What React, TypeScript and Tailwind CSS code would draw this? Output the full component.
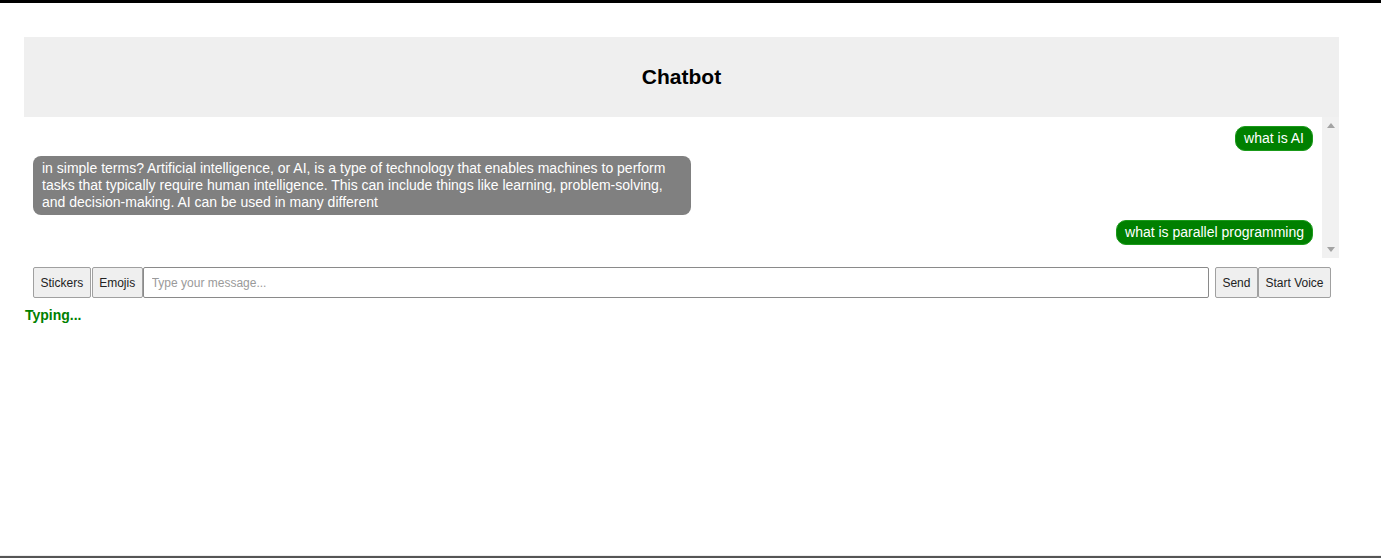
import React from 'react';

export default function App() {
  const messages = [
    { from: 'user', text: 'what is AI' },
    {
      from: 'bot',
      text: 'in simple terms? Artificial intelligence, or AI, is a type of technology that enables machines to perform tasks that typically require human intelligence. This can include things like learning, problem-solving, and decision-making. AI can be used in many different',
    },
    { from: 'user', text: 'what is parallel programming' },
  ];

  const btn = 'h-[31px] px-[6.5px] bg-[#efefef] border border-[#a0a0a0] rounded-[2px] text-[#222]';

  return (
    <div className="w-[1381px] h-[558px] bg-white border-t-[3px] border-black font-['Liberation_Sans',Arial,sans-serif] relative">
      <div className="ml-[24px] mt-[34px] w-[1315px]">
        {/* Header */}
        <div className="h-[80px] bg-[#efefef] flex items-center justify-center">
          <h1 className="text-[21px] font-bold text-black">Chatbot</h1>
        </div>

        {/* Messages + scrollbar */}
        <div className="h-[141px] flex bg-white">
          <div className="flex-1 overflow-hidden pl-[9px] pr-[9px] pt-[9px] flex flex-col gap-[5px]">
            {messages.map((m, i) =>
              m.from === 'user' ? (
                <div key={i} className="flex justify-end">
                  <div className="bg-[#008000] border border-[#1a9a1a] text-white text-[14px] leading-[17px] px-[8px] py-[3px] rounded-[10px]">
                    {m.text}
                  </div>
                </div>
              ) : (
                <div key={i} className="flex justify-start">
                  <div className="bg-[#808080] text-white text-[14px] leading-[17px] px-[9px] py-[4px] rounded-[8px] max-w-[658px]">
                    {m.text}
                  </div>
                </div>
              )
            )}
          </div>
          <div className="w-[17px] bg-[#f1f1f1] flex flex-col items-center justify-between py-[6px]">
            <svg width="8" height="5" viewBox="0 0 8 5"><path d="M0 5 L4 0 L8 5 Z" fill="#a3a3a3" /></svg>
            <svg width="8" height="5" viewBox="0 0 8 5"><path d="M0 0 L4 5 L8 0 Z" fill="#a3a3a3" /></svg>
          </div>
        </div>

        {/* Input row */}
        <div className="flex items-center mt-[9px] pl-[9px] pr-[8px] text-[12px]">
          <button className={btn}>Stickers</button>
          <button className={`${btn} ml-[1px]`}>Emojis</button>
          <input
            className="flex-1 h-[31px] px-[8px] border border-[#8a8a8a] rounded-[2px] outline-none placeholder:text-[#9a9a9a]"
            placeholder="Type your message..."
          />
          <button className={`${btn} ml-[6px]`}>Send</button>
          <button className={btn}>Start Voice</button>
        </div>

        <div className="mt-[7px] ml-[1px] text-[14px] font-bold text-[#008000]">Typing...</div>
      </div>

      <div className="absolute left-0 right-0 bottom-0 h-[3px] bg-[#efefef] border-b-2 border-[#555]" />
    </div>
  );
}
